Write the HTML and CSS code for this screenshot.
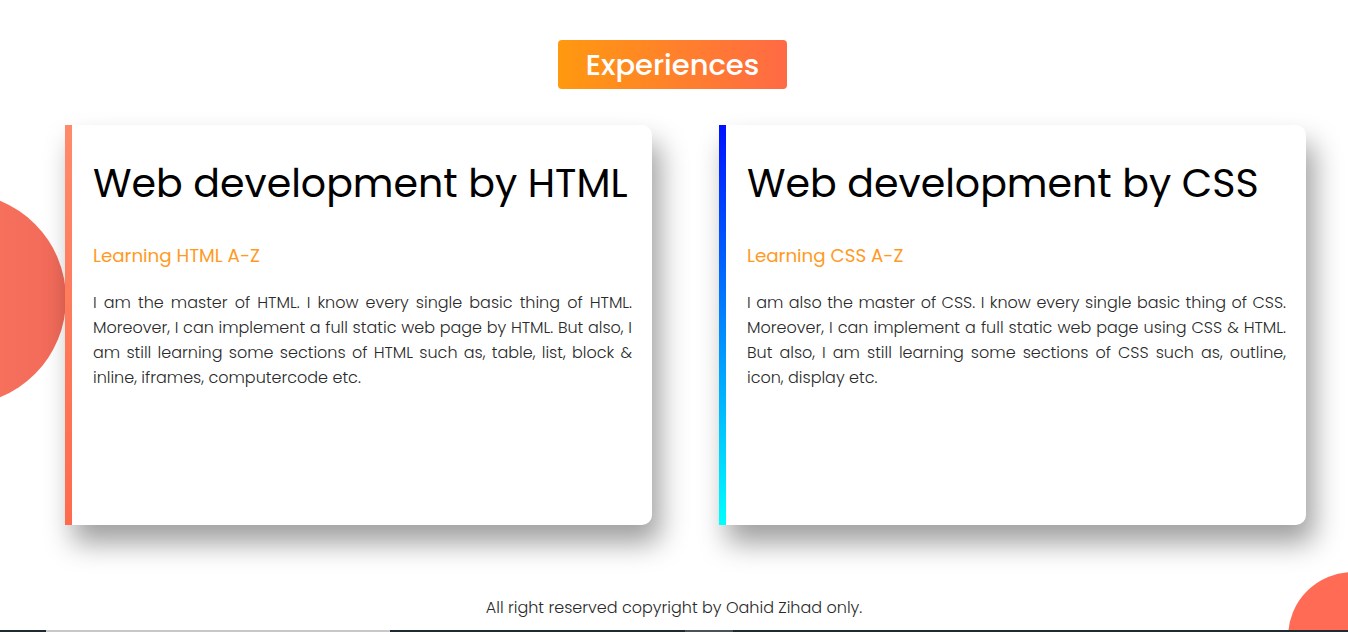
FILE: index.html
```html
<!DOCTYPE html>
<html lang="en">
<head>
<meta charset="utf-8">
<title>Experiences</title>
<link rel="stylesheet" href="styles.css">
</head>
<body>
<div class="page">
  <div class="blob blob-left"></div>
  <div class="blob blob-right"></div>
  <section class="experiences">
    <div class="title-row"><h2 class="badge">Experiences</h2></div>
    <div class="cards">
      <article class="card card-html">
        <h1 class="card-title">Web development by HTML</h1>
        <h3 class="card-sub">Learning HTML A-Z</h3>
        <p class="card-text">I am the master of HTML. I know every single basic thing of HTML. Moreover, I can implement a full static web page by HTML. But also, I am still learning some sections of HTML such as, table, list, block &amp; inline, iframes, computercode etc.</p>
      </article>
      <article class="card card-css">
        <h1 class="card-title">Web development by CSS</h1>
        <h3 class="card-sub">Learning CSS A-Z</h3>
        <p class="card-text">I am also the master of CSS. I know every single basic thing of CSS. Moreover, I can implement a full static web page using CSS &amp; HTML. But also, I am still learning some sections of CSS such as, outline, icon, display etc.</p>
      </article>
    </div>
    <footer class="footer">All right reserved copyright by Oahid Zihad only.</footer>
  </section>
  <div class="next-strip">
    <span class="seg seg-dark1"></span><span class="seg seg-light1"></span><span class="seg seg-dark2"></span><span class="seg seg-light2"></span><span class="seg seg-dark3"></span>
  </div>
</div>
</body>
</html>
```

FILE: styles.css
```css
* { box-sizing: border-box; }
html, body { margin: 0; padding: 0; }
body {
  background: #ffffff;
  font-family: "Poppins", "Open Sans", "Noto Sans", sans-serif;
  overflow: hidden;
}
.page {
  position: relative;
  width: 1348px;
  height: 632px;
  overflow: hidden;
  display: flex;
  flex-direction: column;
}
.blob {
  position: absolute;
  border-radius: 50%;
  z-index: 0;
}
.blob-left {
  width: 212px;
  height: 212px;
  left: -146px;
  top: 193px;
  background: linear-gradient(90deg, #ff7d60, #f26a5a);
}
.blob-right {
  width: 130px;
  height: 130px;
  left: 1288px;
  top: 572px;
  background: #ff6b55;
}
.experiences {
  position: relative;
  z-index: 1;
  flex: 1;
  display: flex;
  flex-direction: column;
  padding-top: 40px;
}
.title-row {
  display: flex;
  justify-content: center;
  padding-right: 3px;
}
.badge {
  margin: 0;
  width: 229px;
  height: 49px;
  border-radius: 4px;
  background: linear-gradient(90deg, #ff990f, #ff6a45);
  color: #ffffff;
  font-weight: 500;
  font-size: 29px;
  line-height: 50px;
  text-align: center;
}
.cards {
  display: flex;
  gap: 67px;
  padding-left: 65px;
  margin-top: 36px;
}
.card {
  width: 587px;
  height: 400px;
  background: #ffffff;
  border-radius: 0 10px 10px 0;
  padding: 31px 20px 0 28px;
  box-shadow: 8px 18px 28px rgba(0, 0, 0, 0.38);
  position: relative;
}
.card::before {
  content: "";
  position: absolute;
  left: 0;
  top: 0;
  bottom: 0;
  width: 7px;
}
.card-html::before { background: linear-gradient(180deg, #ff8a6a, #ff6a4c); }
.card-css::before { background: linear-gradient(180deg, #0010ff, #00ffff); }
.card-title {
  margin: 0;
  font-size: 39.5px;
  font-weight: 400;
  line-height: 56px;
  color: #000000;
  white-space: nowrap;
}
.card-sub {
  margin: 30px 0 0 0;
  font-size: 18.3px;
  font-weight: 400;
  line-height: 28px;
  color: #ff9a1f;
}
.card-text {
  margin: 20px 0 0 0;
  font-size: 16px;
  font-weight: 300;
  line-height: 25px;
  color: #2a2a2a;
  text-align: justify;
}
.footer {
  margin-top: 71px;
  text-align: center;
  font-size: 16px;
  font-weight: 300;
  color: #2a2a2a;
  line-height: 24px;
}
.next-strip {
  position: absolute;
  left: 0;
  bottom: 0;
  width: 100%;
  height: 2px;
  display: flex;
  z-index: 2;
}
.seg { height: 2px; display: block; }
.seg-dark1 { width: 46px; background: #1f2b30; }
.seg-light1 { width: 344px; background: #c8c8c8; }
.seg-dark2 { width: 295px; background: #1f2b30; }
.seg-light2 { width: 48px; background: #4a5358; }
.seg-dark3 { flex: 1; background: #1f2b30; }
```
